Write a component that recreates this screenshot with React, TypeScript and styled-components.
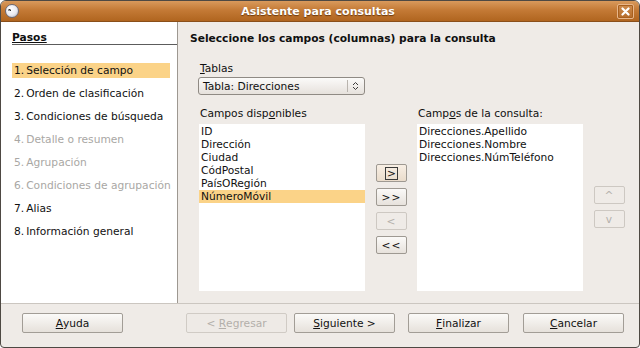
import React from 'react';
import styled, { createGlobalStyle } from 'styled-components';

const GlobalStyle = createGlobalStyle`
  html, body {
    margin: 0;
    padding: 0;
    background: #ffffff;
  }
  body {
    font-family: "DejaVu Sans", "Liberation Sans", sans-serif;
    font-size: 10.67px;
    color: #101010;
  }
`;

const Window = styled.div`
  width: 640px;
  height: 348px;
  box-sizing: border-box;
  border: 1px solid #4e4943;
  border-radius: 6px 6px 4px 4px;
  overflow: hidden;
  display: flex;
  flex-direction: column;
  background: #efebe7;
`;

const TitleBar = styled.div`
  height: 20px;
  flex: none;
  display: flex;
  align-items: center;
  padding: 0 5px 0 4px;
  background: linear-gradient(to bottom, #d99a5c 0%, #c47a36 45%, #b0651f 100%);
  border-bottom: 1px solid #8a4f1a;
`;

const TitleIcon = styled.div`
  width: 14px;
  height: 14px;
  border-radius: 50%;
  background: radial-gradient(circle at 40% 35%, #ffffff 0%, #eaeaf0 55%, #a9acb8 100%);
  border: 1px solid #6a6a78;
  box-sizing: border-box;
  flex: none;
`;

const TitleText = styled.div`
  flex: 1;
  text-align: center;
  color: #ffffff;
  font-weight: bold;
  font-size: 11px;
  text-shadow: 0 1px 1px #6b3a0e;
`;

const CloseBox = styled.div`
  width: 15px;
  height: 13px;
  border: 1px solid #e8b68a;
  border-radius: 2px;
  background: linear-gradient(to bottom, #cf8c4d, #b56c2a);
  box-shadow: inset 0 0 0 1px #a8601f;
  display: flex;
  align-items: center;
  justify-content: center;
  flex: none;
`;

const Body = styled.div`
  flex: 1;
  display: flex;
  min-height: 0;
`;

const StepsPanel = styled.div`
  width: 177px;
  flex: none;
  background: #ffffff;
  border-right: 1px solid #9d9891;
  padding: 9px 0 0 11px;
  box-sizing: border-box;
`;

const StepsHeader = styled.div`
  font-weight: bold;
  text-decoration: underline;
  height: 13px;
  line-height: 13px;
  border-bottom: 1px solid #5c5c5c;
  margin-bottom: 18px;
`;

const StepItem = styled.div<{ $active?: boolean; $disabled?: boolean }>`
  height: 15px;
  line-height: 15px;
  margin: 0 7px 8px 0;
  padding-left: 2px;
  white-space: nowrap;
  color: ${(p) => (p.$disabled ? '#a9a7a4' : '#111111')};
  background: ${(p) => (p.$active ? '#fbd388' : 'transparent')};
`;

const StepNum = styled.span`
  margin-right: 2px;
`;

const Content = styled.div`
  flex: 1;
  padding: 10px 0 0 12px;
  box-sizing: border-box;
  display: flex;
  flex-direction: column;
`;

const Heading = styled.div`
  font-weight: bold;
  height: 13px;
  line-height: 13px;
  margin-bottom: 17px;
`;

const Indent = styled.div`
  padding-left: 9px;
  display: flex;
  flex-direction: column;
`;

const FieldLabel = styled.div<{ $gap?: number }>`
  height: 13px;
  line-height: 13px;
  margin-bottom: ${(p) => p.$gap ?? 2}px;
  padding-left: 1px;
  white-space: nowrap;
`;

const Combo = styled.div`
  width: 167px;
  height: 18px;
  box-sizing: border-box;
  border: 1px solid #8f8a84;
  border-radius: 3px;
  background: linear-gradient(to bottom, #fbfaf9, #e6e1dc);
  display: flex;
  align-items: center;
  padding-left: 4px;
  margin-left: -1px;
`;

const ComboText = styled.div`
  flex: 1;
`;

const ComboArrow = styled.div`
  width: 14px;
  height: 12px;
  border-left: 1px solid #b9b4ae;
  display: flex;
  align-items: center;
  justify-content: center;
  margin-right: 2px;
`;

const ListsRow = styled.div`
  display: flex;
  margin-top: 12px;
`;

const ListColumn = styled.div`
  width: 166px;
  display: flex;
  flex-direction: column;
`;

const ListBox = styled.div`
  height: 167px;
  background: #ffffff;
  padding-top: 1px;
  box-sizing: border-box;
`;

const ListItem = styled.div<{ $selected?: boolean }>`
  height: 13px;
  line-height: 13px;
  padding-left: 2px;
  background: ${(p) => (p.$selected ? '#fbd388' : 'transparent')};
  white-space: nowrap;
`;

const MoveColumn = styled.div<{ $top: number }>`
  width: 31px;
  display: flex;
  flex-direction: column;
  gap: 6px;
  padding-top: ${(p) => p.$top}px;
`;

const MoveGap = styled.div<{ $w: number }>`
  width: ${(p) => p.$w}px;
  flex: none;
`;

const SmallButton = styled.div<{ $disabled?: boolean; $focus?: boolean }>`
  height: 18px;
  box-sizing: border-box;
  border: 1px solid ${(p) => (p.$disabled ? '#cdc8c2' : '#9e9992')};
  border-radius: 2px;
  background: ${(p) =>
    p.$focus
      ? 'linear-gradient(to bottom, #f8efe5, #eadccb)'
      : p.$disabled
      ? '#efebe7'
      : 'linear-gradient(to bottom, #fbfaf8, #e7e2dc)'};
  color: ${(p) => (p.$disabled ? '#b5b1ac' : '#111111')};
  display: flex;
  align-items: center;
  justify-content: center;
  letter-spacing: 1px;
`;

const FocusMark = styled.span`
  border: 1px solid #3a3a3a;
  padding: 0 1px;
  line-height: 11px;
  letter-spacing: 0;
`;

const Footer = styled.div`
  height: 44px;
  flex: none;
  border-top: 1px solid #cbc6c0;
  display: flex;
  align-items: flex-start;
  padding: 9px 0 0 21px;
  box-sizing: border-box;
`;

const DialogButton = styled.div<{ $disabled?: boolean; $ml?: number }>`
  width: 101px;
  height: 20px;
  box-sizing: border-box;
  margin-left: ${(p) => p.$ml ?? 0}px;
  border: 1px solid ${(p) => (p.$disabled ? '#d0cbc5' : '#a29d96')};
  border-radius: 2px;
  background: ${(p) =>
    p.$disabled ? '#eeeae6' : 'linear-gradient(to bottom, #fbfaf8, #e6e1db)'};
  color: ${(p) => (p.$disabled ? '#b3afaa' : '#111111')};
  display: flex;
  align-items: center;
  justify-content: center;
  white-space: pre;
`;

const U = styled.span`
  text-decoration: underline;
`;

const availableFields = ['ID', 'Dirección', 'Ciudad', 'CódPostal', 'PaísORegión', 'NúmeroMóvil'];
const queryFields = ['Direcciones.Apellido', 'Direcciones.Nombre', 'Direcciones.NúmTeléfono'];

const steps = [
  { label: 'Selección de campo', active: true },
  { label: 'Orden de clasificación' },
  { label: 'Condiciones de búsqueda' },
  { label: 'Detalle o resumen', disabled: true },
  { label: 'Agrupación', disabled: true },
  { label: 'Condiciones de agrupación', disabled: true },
  { label: 'Alias' },
  { label: 'Información general' },
];

const App: React.FC = () => {
  return (
    <>
      <GlobalStyle />
      <Window>
        <TitleBar>
          <TitleIcon>
            <svg width="12" height="12" viewBox="0 0 12 12" style={{ display: 'block' }}>
              <path d="M2 5 L5 5 M3 4 L5 6" stroke="#333" strokeWidth="1" fill="none" />
            </svg>
          </TitleIcon>
          <TitleText>Asistente para consultas</TitleText>
          <CloseBox>
            <svg width="9" height="9" viewBox="0 0 9 9">
              <path d="M1.5 1.5 L7.5 7.5 M7.5 1.5 L1.5 7.5" stroke="#ffffff" strokeWidth="2.2" strokeLinecap="round" />
            </svg>
          </CloseBox>
        </TitleBar>

        <Body>
          <StepsPanel>
            <StepsHeader>Pasos</StepsHeader>
            {steps.map((s, i) => (
              <StepItem key={s.label} $active={s.active} $disabled={s.disabled}>
                <StepNum>{i + 1}.</StepNum>
                {s.label}
              </StepItem>
            ))}
          </StepsPanel>

          <Content>
            <Heading>Seleccione los campos (columnas) para la consulta</Heading>
            <Indent>
              <FieldLabel>
                <U>T</U>ablas
              </FieldLabel>
              <Combo>
                <ComboText>Tabla: Direcciones</ComboText>
                <ComboArrow>
                  <svg width="7" height="10" viewBox="0 0 7 10">
                    <path d="M1 4 L3.5 1.5 L6 4 M1 6 L3.5 8.5 L6 6" stroke="#3c3c3c" strokeWidth="1" fill="none" />
                  </svg>
                </ComboArrow>
              </Combo>

              <ListsRow>
                <ListColumn>
                  <FieldLabel $gap={4}>
                    Campos disp<U>o</U>nibles
                  </FieldLabel>
                  <ListBox>
                    {availableFields.map((f) => (
                      <ListItem key={f} $selected={f === 'NúmeroMóvil'}>
                        {f}
                      </ListItem>
                    ))}
                  </ListBox>
                </ListColumn>

                <MoveGap $w={11} />
                <MoveColumn $top={57}>
                  <SmallButton $focus>
                    <FocusMark>&gt;</FocusMark>
                  </SmallButton>
                  <SmallButton>&gt;&gt;</SmallButton>
                  <SmallButton $disabled>&lt;</SmallButton>
                  <SmallButton>&lt;&lt;</SmallButton>
                </MoveColumn>
                <MoveGap $w={10} />

                <ListColumn>
                  <FieldLabel $gap={4}>
                    Camp<U>o</U>s de la consulta:
                  </FieldLabel>
                  <ListBox>
                    {queryFields.map((f) => (
                      <ListItem key={f}>{f}</ListItem>
                    ))}
                  </ListBox>
                </ListColumn>

                <MoveGap $w={11} />
                <MoveColumn $top={79}>
                  <SmallButton $disabled>^</SmallButton>
                  <SmallButton $disabled>v</SmallButton>
                </MoveColumn>
              </ListsRow>
            </Indent>
          </Content>
        </Body>

        <Footer>
          <DialogButton>
            <U>A</U>yuda
          </DialogButton>
          <DialogButton $disabled $ml={63}>
            {'< '}
            <U>R</U>egresar
          </DialogButton>
          <DialogButton $ml={7}>
            <U>S</U>iguiente{' >'}
          </DialogButton>
          <DialogButton $ml={13}>
            <U>F</U>inalizar
          </DialogButton>
          <DialogButton $ml={14}>
            <U>C</U>ancelar
          </DialogButton>
        </Footer>
      </Window>
    </>
  );
};

export default App;
